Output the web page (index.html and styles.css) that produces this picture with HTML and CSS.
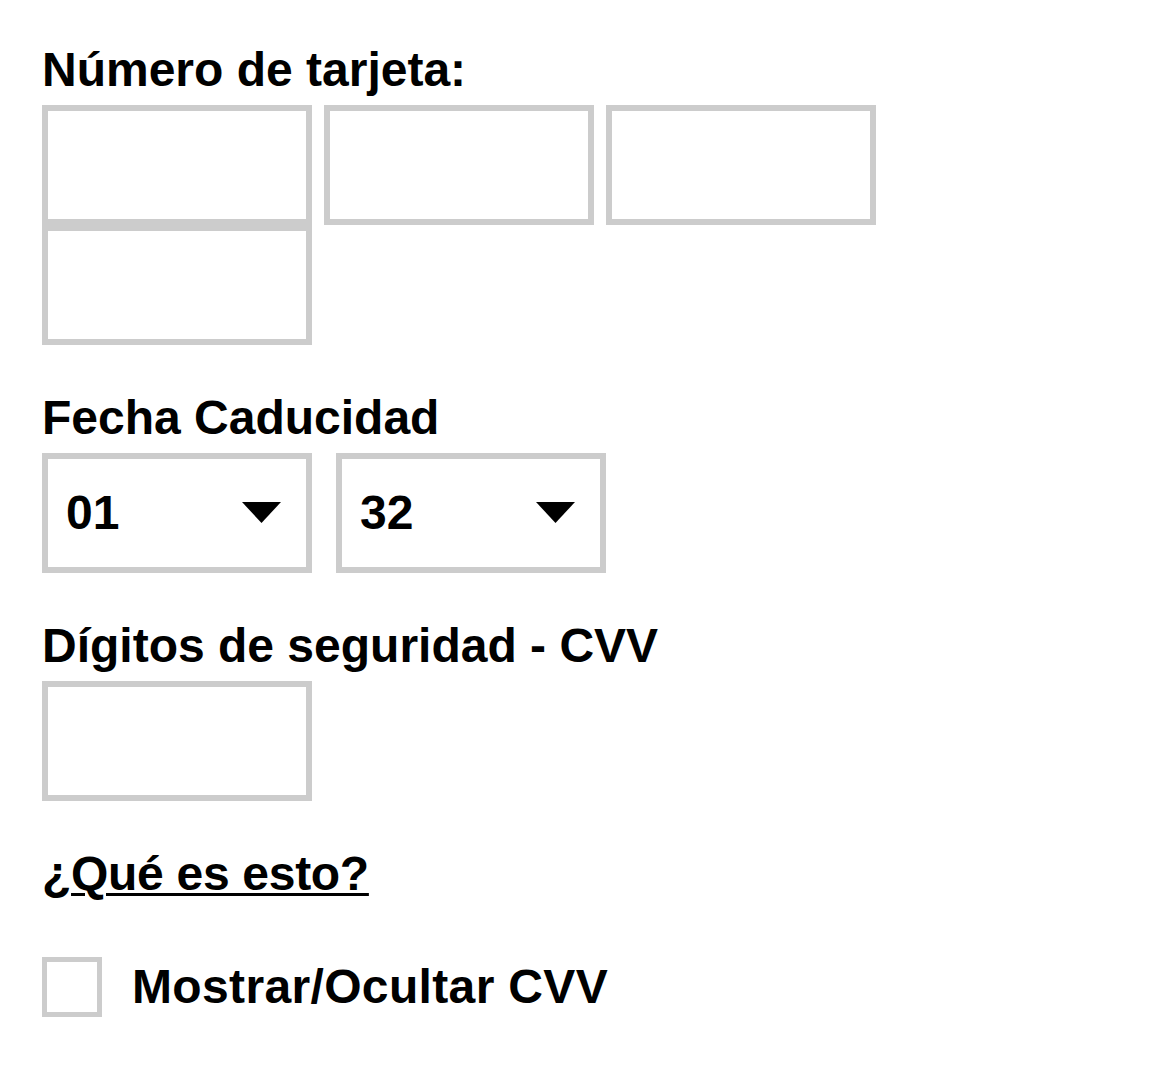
FILE: index.html
```html
<!DOCTYPE html>
<html lang="es">
<head>
<meta charset="utf-8">
<title>Datos de tarjeta</title>
<link rel="stylesheet" href="styles.css">
</head>
<body>
<form class="card-form">
  <section class="field">
    <label class="field-label" for="cc1">Número de tarjeta:</label>
    <div class="card-number">
      <input class="text-box" id="cc1" type="text" inputmode="numeric">
      <input class="text-box" type="text" inputmode="numeric">
      <input class="text-box" type="text" inputmode="numeric">
      <input class="text-box" type="text" inputmode="numeric">
    </div>
  </section>

  <section class="field">
    <label class="field-label" for="month">Fecha Caducidad</label>
    <div class="expiry">
      <div class="select-wrap">
        <select class="select-box" id="month">
          <option>01</option><option>02</option><option>03</option>
        </select>
        <svg class="caret" width="39" height="21" viewBox="0 0 39 21" aria-hidden="true"><polygon points="0,0 39,0 19.5,21" fill="#000"/></svg>
      </div>
      <div class="select-wrap">
        <select class="select-box">
          <option>32</option><option>33</option><option>34</option>
        </select>
        <svg class="caret" width="39" height="21" viewBox="0 0 39 21" aria-hidden="true"><polygon points="0,0 39,0 19.5,21" fill="#000"/></svg>
      </div>
    </div>
  </section>

  <section class="field">
    <label class="field-label" for="cvv">Dígitos de seguridad - CVV</label>
    <div class="cvv-row">
      <input class="text-box" id="cvv" type="password" inputmode="numeric">
    </div>
  </section>

  <p class="help">¿<a class="help-link" href="#">Qué es esto?</a></p>

  <label class="toggle">
    <input class="check" type="checkbox">
    <span class="toggle-text">Mostrar/Ocultar CVV</span>
  </label>
</form>
</body>
</html>
```

FILE: styles.css
```css
html, body {
  margin: 0;
  padding: 0;
  background: #fff;
}

body {
  font-family: "Liberation Sans", Arial, Helvetica, sans-serif;
  font-weight: bold;
  font-size: 48px;
  line-height: 56px;
  color: #000;
}

.card-form {
  padding: 42px 42px 0 42px;
  display: flex;
  flex-direction: column;
}

.field {
  display: flex;
  flex-direction: column;
  margin-bottom: 45px;
}

.field-label {
  display: block;
  margin-bottom: 7px;
}

.card-number {
  display: flex;
  flex-wrap: wrap;
  column-gap: 12px;
  row-gap: 0;
}

.text-box {
  box-sizing: border-box;
  width: 270px;
  height: 120px;
  margin: 0;
  padding: 0 16px;
  border: 6px solid #cccccc;
  border-radius: 0;
  background: #fff;
  font: inherit;
  outline: none;
}

.expiry {
  display: flex;
  column-gap: 24px;
}

.select-wrap {
  position: relative;
  width: 270px;
  height: 120px;
}

.select-box {
  -webkit-appearance: none;
  appearance: none;
  box-sizing: border-box;
  width: 270px;
  height: 120px;
  margin: 0;
  padding: 0 0 0 18px;
  border: 6px solid #cccccc;
  border-radius: 0;
  background: #fff;
  color: #000;
  font: inherit;
  line-height: 56px;
  outline: none;
}

.caret {
  position: absolute;
  right: 31px;
  top: 49px;
  pointer-events: none;
}

.cvv-row {
  display: flex;
}

.help {
  margin: 0 0 55px 0;
  letter-spacing: -0.3px;
}

.help-link {
  color: #000;
  text-decoration: underline;
  text-decoration-thickness: 3px;
  text-underline-offset: 3px;
}

.toggle {
  display: flex;
  align-items: center;
  column-gap: 30px;
}

.toggle-text {
  letter-spacing: 0.35px;
}

.check {
  -webkit-appearance: none;
  appearance: none;
  box-sizing: border-box;
  width: 60px;
  height: 60px;
  margin: 0;
  border: 5px solid #cccccc;
  border-radius: 0;
  background: #fff;
  flex: none;
}
```
